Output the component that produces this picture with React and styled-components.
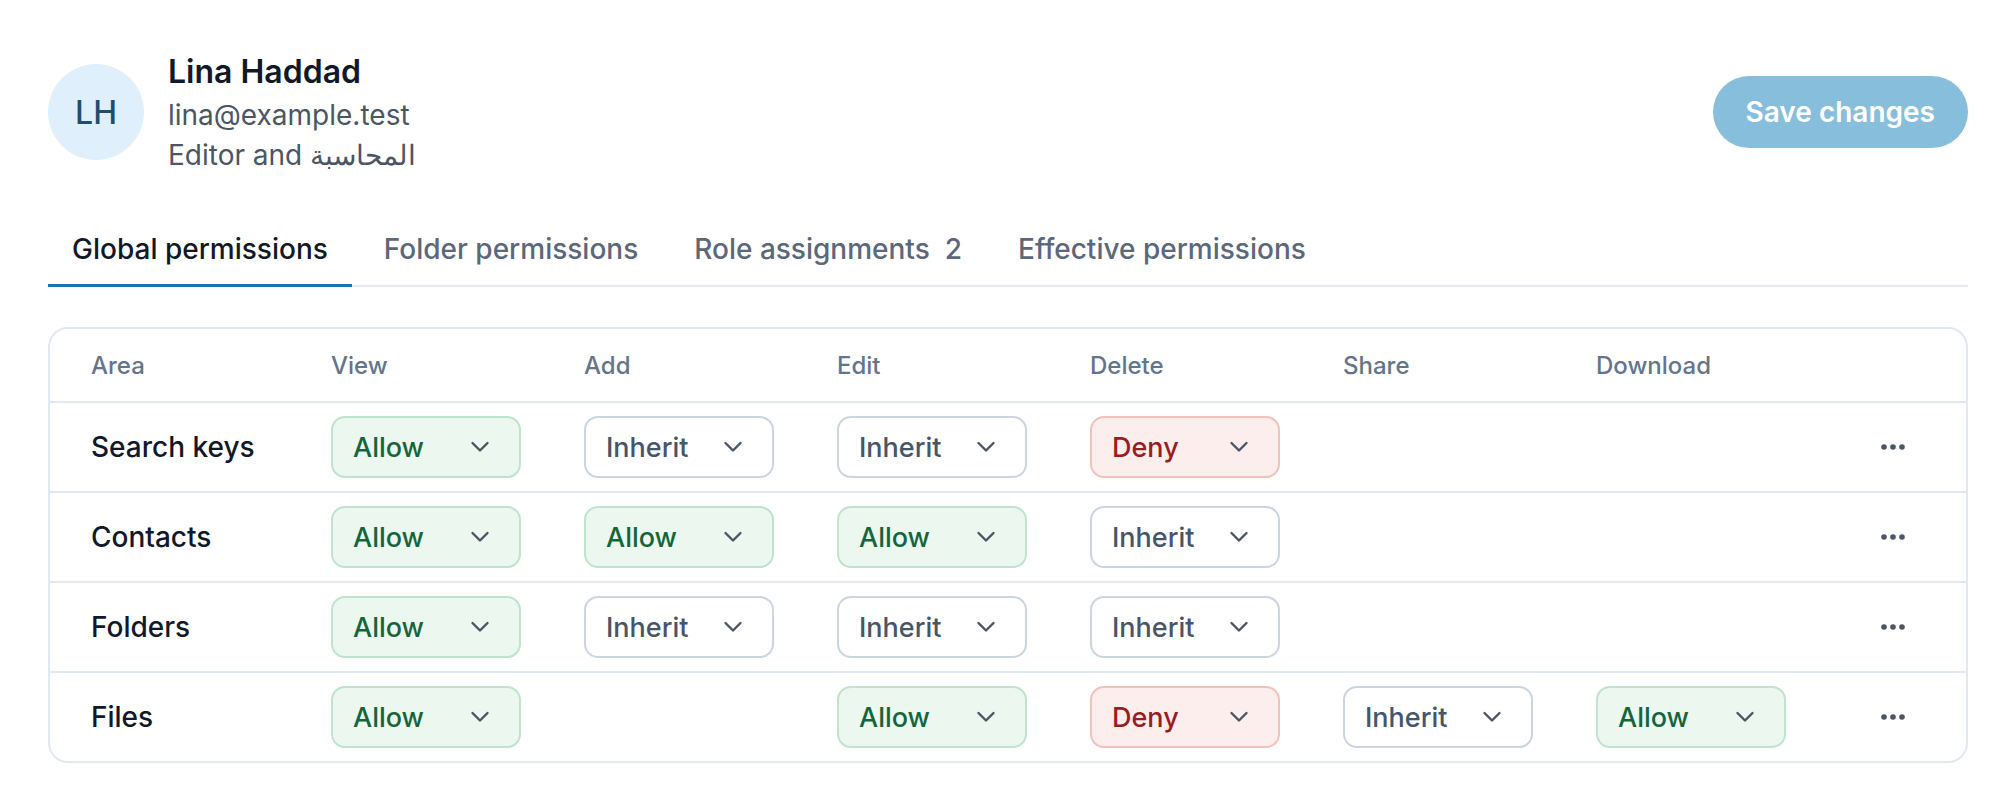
import React from "react";
import styled, { createGlobalStyle } from "styled-components";

const GlobalStyle = createGlobalStyle`
  body {
    margin: 0;
    background: #ffffff;
    font-family: Inter, "Noto Sans", sans-serif;
    color: #111827;
  }
`;

const Page = styled.div`
  padding: 48px 48px 40px;
`;

const Header = styled.header`
  display: flex;
  align-items: center;
  justify-content: space-between;
  height: 128px;
`;

const Profile = styled.div`
  display: flex;
  align-items: center;
  gap: 24px;
`;

const Avatar = styled.div`
  width: 96px;
  height: 96px;
  border-radius: 50%;
  background: #dff0fc;
  color: #1d4e6e;
  display: flex;
  align-items: center;
  justify-content: center;
  font-size: 32px;
  font-weight: 500;
`;

const Details = styled.div`
  display: flex;
  flex-direction: column;
`;

const Name = styled.div`
  font-size: 32px;
  font-weight: 600;
  line-height: 46px;
  color: #111827;
`;

const Meta = styled.div`
  font-size: 28px;
  line-height: 40px;
  color: #4b5563;
`;

const SaveButton = styled.button`
  height: 72px;
  padding: 0 33px;
  border: none;
  border-radius: 36px;
  background: #87bedc;
  color: #ffffff;
  font-family: inherit;
  font-size: 28px;
  font-weight: 600;
  cursor: pointer;
`;

const Tabs = styled.nav`
  display: flex;
  gap: 8px;
  margin-top: 38px;
  border-bottom: 2px solid #e2e8f0;
`;

const Tab = styled.div`
  display: flex;
  align-items: center;
  gap: 15px;
  height: 70px;
  padding: 0 24px;
  margin-bottom: -2px;
  border-bottom: 3px solid ${(p) => (p.$active ? "#1d73b0" : "transparent")};
  font-size: 28px;
  font-weight: 500;
  color: ${(p) => (p.$active ? "#111827" : "#5b677a")};
`;

const Card = styled.div`
  margin-top: 40px;
  border: 2px solid #e2e8f0;
  border-radius: 20px;
  overflow: hidden;
`;

const Row = styled.div`
  display: grid;
  grid-template-columns: 240px repeat(6, minmax(0, 1fr)) 68px;
  align-items: center;
  height: ${(p) => (p.$head ? "72px" : "88px")};
  padding: 0 49px 0 41px;
  & + & {
    border-top: 2px solid #e2e8f0;
  }
`;

const HeadCell = styled.div`
  font-size: 24px;
  font-weight: 500;
  color: #64748b;
`;

const AreaName = styled.div`
  font-size: 28px;
  font-weight: 500;
  color: #111827;
`;

const tones = {
  Allow: { bg: "#ecf7f0", border: "#bfe3cc", color: "#14663a" },
  Deny: { bg: "#fdeeee", border: "#f3c1bb", color: "#9b1c1c" },
  Inherit: { bg: "#ffffff", border: "#cbd5e1", color: "#475569" },
};

const Select = styled.div`
  display: flex;
  align-items: center;
  justify-content: space-between;
  box-sizing: border-box;
  width: 190px;
  height: 62px;
  padding: 0 29px 0 20px;
  border: 2px solid ${(p) => tones[p.$value].border};
  border-radius: 14px;
  background: ${(p) => tones[p.$value].bg};
  color: ${(p) => tones[p.$value].color};
  font-size: 27px;
  font-weight: 500;
`;

const MoreButton = styled.button`
  justify-self: end;
  width: 48px;
  height: 48px;
  border: none;
  background: transparent;
  display: flex;
  align-items: center;
  justify-content: center;
  padding: 0;
  cursor: pointer;
`;

const Chevron = () => (
  <svg width="20" height="12" viewBox="0 0 20 12" fill="none">
    <path d="M2.5 2 L10 9.5 L17.5 2" stroke="#4b5563" strokeWidth="2.4" strokeLinecap="round" strokeLinejoin="round" />
  </svg>
);

const Dots = () => (
  <svg width="26" height="8" viewBox="0 0 26 8">
    <circle cx="4" cy="4" r="2.8" fill="#4b5563" />
    <circle cx="13" cy="4" r="2.8" fill="#4b5563" />
    <circle cx="22" cy="4" r="2.8" fill="#4b5563" />
  </svg>
);

const columns = ["View", "Add", "Edit", "Delete", "Share", "Download"];

const rows = [
  { area: "Search keys", values: ["Allow", "Inherit", "Inherit", "Deny", null, null] },
  { area: "Contacts", values: ["Allow", "Allow", "Allow", "Inherit", null, null] },
  { area: "Folders", values: ["Allow", "Inherit", "Inherit", "Inherit", null, null] },
  { area: "Files", values: ["Allow", null, "Allow", "Deny", "Inherit", "Allow"] },
];

const PermissionSelect = ({ value }) => (
  <Select $value={value}>
    <span>{value}</span>
    <Chevron />
  </Select>
);

export default function App() {
  return (
    <Page>
      <GlobalStyle />
      <Header>
        <Profile>
          <Avatar>LH</Avatar>
          <Details>
            <Name>Lina Haddad</Name>
            <Meta>lina@example.test</Meta>
            <Meta>Editor and المحاسبة</Meta>
          </Details>
        </Profile>
        <SaveButton>Save changes</SaveButton>
      </Header>

      <Tabs>
        <Tab $active>Global permissions</Tab>
        <Tab>Folder permissions</Tab>
        <Tab>
          Role assignments <span>2</span>
        </Tab>
        <Tab>Effective permissions</Tab>
      </Tabs>

      <Card>
        <Row $head>
          <HeadCell>Area</HeadCell>
          {columns.map((c) => (
            <HeadCell key={c}>{c}</HeadCell>
          ))}
          <div />
        </Row>
        {rows.map((r) => (
          <Row key={r.area}>
            <AreaName>{r.area}</AreaName>
            {r.values.map((v, i) => (
              <div key={i}>{v && <PermissionSelect value={v} />}</div>
            ))}
            <MoreButton aria-label="More">
              <Dots />
            </MoreButton>
          </Row>
        ))}
      </Card>
    </Page>
  );
}
